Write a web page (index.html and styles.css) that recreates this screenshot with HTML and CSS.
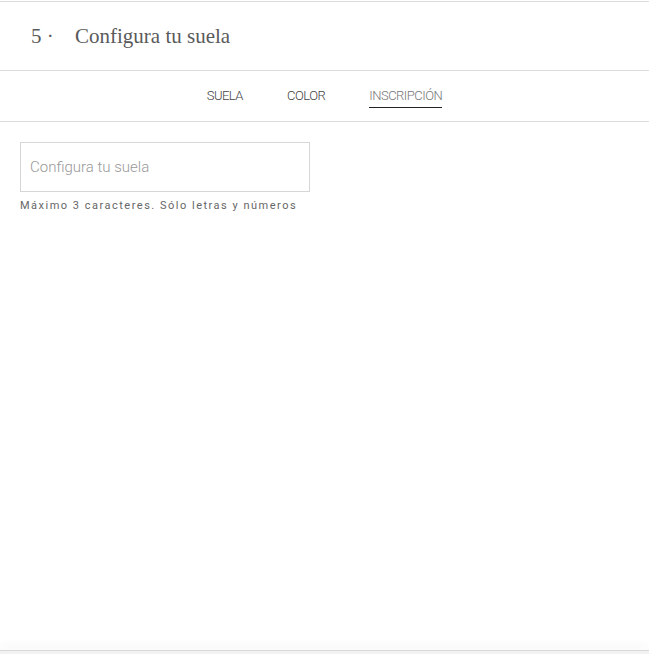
FILE: index.html
```html
<!DOCTYPE html>
<html lang="es">
<head>
<meta charset="utf-8">
<title>Configura tu suela</title>
<link rel="stylesheet" href="styles.css">
</head>
<body>
<div class="page">
  <header class="step-header">
    <span class="step-num">5 ·</span>
    <h1 class="step-title">Configura tu suela</h1>
  </header>
  <nav class="tabs">
    <span class="tab">SUELA</span>
    <span class="tab">COLOR</span>
    <span class="tab tab-active">INSCRIPCIÓN</span>
  </nav>
  <section class="content">
    <input class="text-input" type="text" placeholder="Configura tu suela">
    <p class="hint">Máximo 3 caracteres. Sólo letras y números</p>
  </section>
</div>
<div class="bottom-bar"></div>
</body>
</html>
```
FILE: styles.css
```css
html, body {
  margin: 0;
  padding: 0;
  background: #fff;
}
body {
  font-family: Roboto, "Liberation Sans", sans-serif;
  color: #555;
}
.page {
  border-top: 1px solid #dcdcdc;
  margin-top: 1px;
}
.step-header {
  display: flex;
  align-items: center;
  height: 68px;
  padding-left: 31px;
  border-bottom: 1px solid #dcdcdc;
  font-family: "Liberation Serif", serif;
  color: #5a5a5a;
}
.step-num {
  font-size: 21px;
  width: 44px;
}
.step-title {
  margin: 0;
  font-size: 21px;
  font-weight: normal;
}
.tabs {
  display: flex;
  justify-content: center;
  gap: 44px;
  height: 50px;
  align-items: center;
  border-bottom: 1px solid #dcdcdc;
  font-size: 13px;
  font-weight: 300;
  letter-spacing: -0.5px;
  color: #444;
}
.tab {
  padding-top: 3px;
  padding-bottom: 4px;
  border-bottom: 1px solid transparent;
}
.tab-active {
  border-bottom-color: #222;
  color: #777;
}
.content {
  padding: 20px 20px 0;
}
.text-input {
  display: block;
  box-sizing: border-box;
  width: 290px;
  height: 50px;
  border: 1px solid #d6d6d6;
  padding: 0 9px;
  font-family: Roboto, "Liberation Sans", sans-serif;
  font-size: 15px;
  font-weight: 300;
  color: #555;
  outline: none;
  margin: 0;
}
.text-input::placeholder {
  color: #999;
}
.hint {
  margin: 7px 0 0;
  font-size: 11px;
  letter-spacing: 1.5px;
  color: #666;
}
.bottom-bar {
  position: fixed;
  left: 0;
  right: 0;
  bottom: 0;
  height: 3px;
  border-top: 1px solid #d8d8d8;
  background: #f2f2f2;
  box-shadow: 0 -5px 10px rgba(0, 0, 0, 0.05);
}
```
